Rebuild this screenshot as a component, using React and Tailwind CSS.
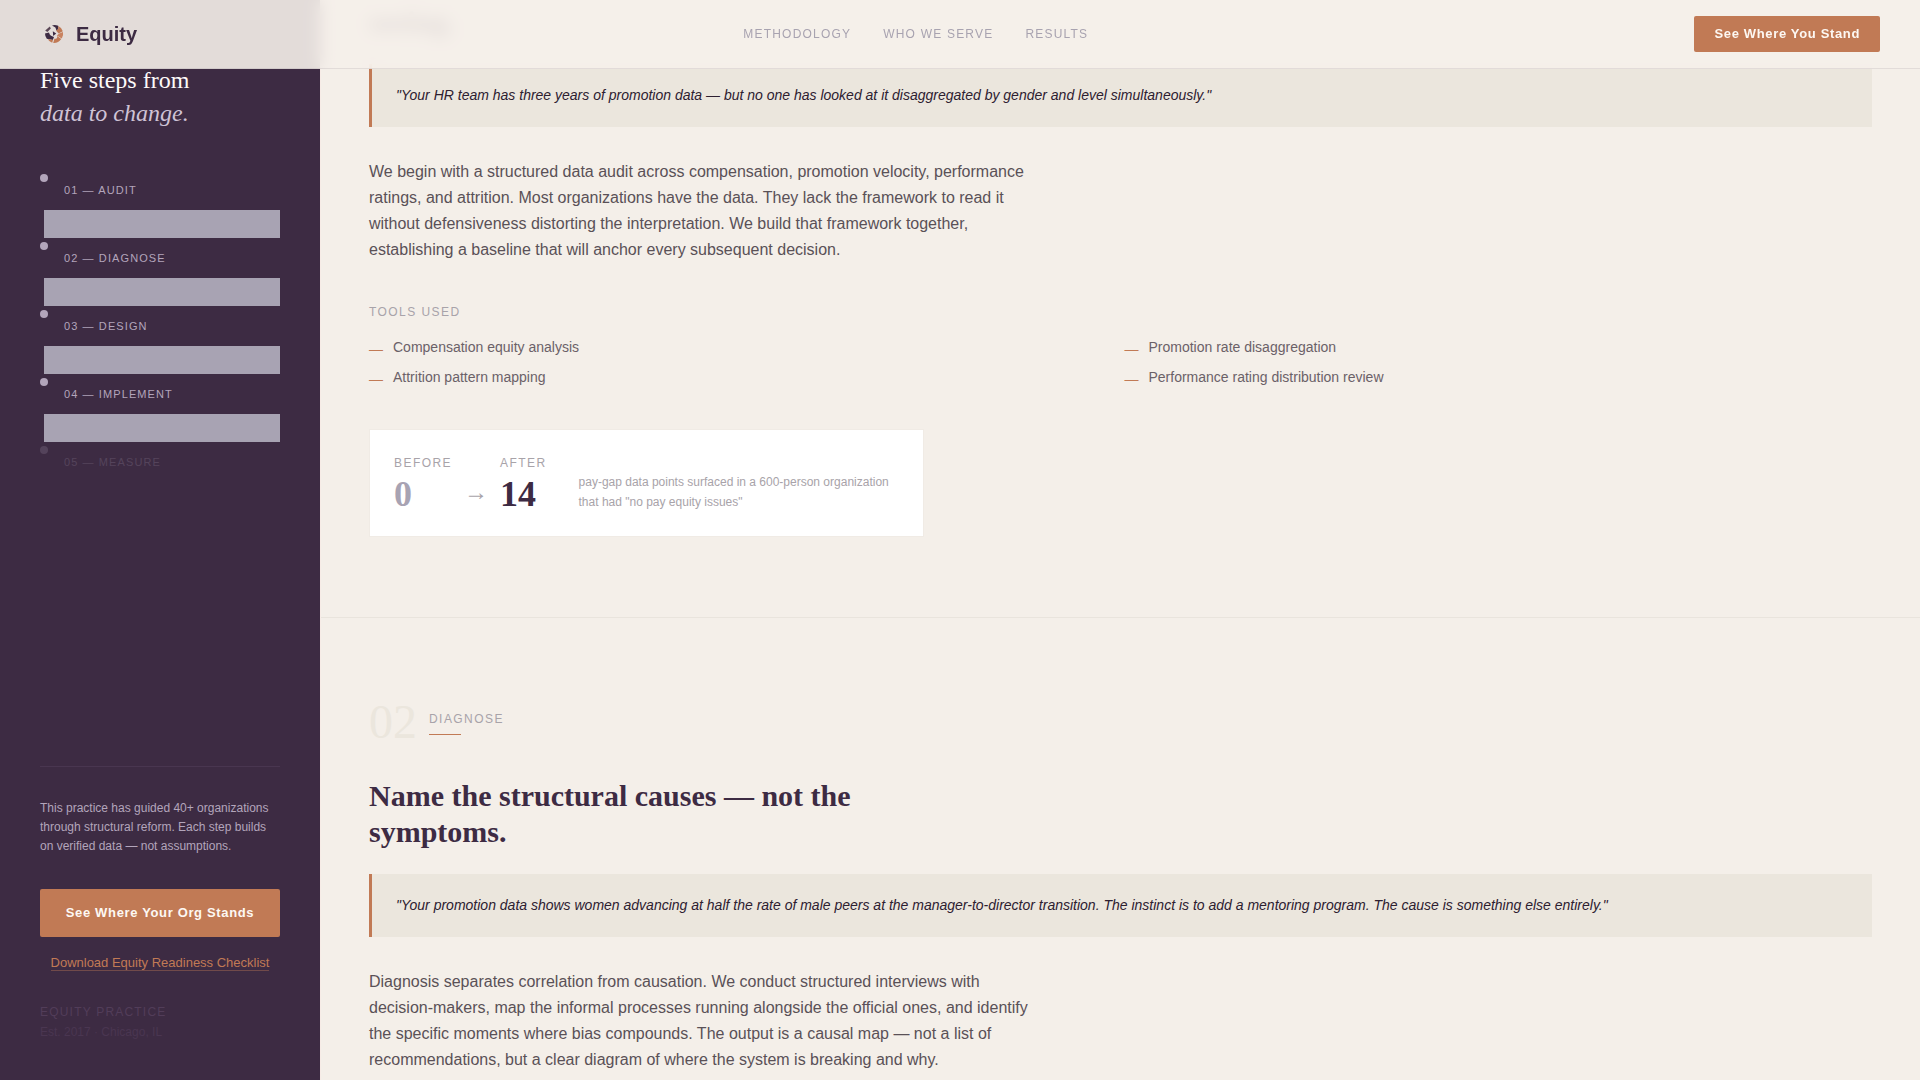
import clsx from 'clsx';

const NAV_LINKS = ['Methodology', 'Who We Serve', 'Results'];

const STEPS = [
  { id: 'audit', label: '01 — Audit', reached: true },
  { id: 'diagnose', label: '02 — Diagnose', reached: true },
  { id: 'design', label: '03 — Design', reached: true },
  { id: 'implement', label: '04 — Implement', reached: true },
  { id: 'measure', label: '05 — Measure', reached: false },
];

const AUDIT_TOOLS = [
  'Compensation equity analysis',
  'Promotion rate disaggregation',
  'Attrition pattern mapping',
  'Performance rating distribution review',
];

function Logo() {
  return (
    <svg width="28" height="28" viewBox="0 0 28 28" aria-hidden="true">
      <path d="M5.2 10.6 L9.8 6.4 L10.8 8.6 L7.4 12 Z" fill="#5b4656" />
      <path d="M12 5.4 Q15 4.4 18.2 5.8 L18.4 8.8 L16.6 10.8 L15.4 7.6 Z" fill="#3d2b43" />
      <path d="M18.2 6 Q21.8 7.6 22.8 11.2 L18.6 13.4 L16.2 10.8 L18.4 8.8 Z" fill="#c17a55" />
      <path d="M23 12 A9 9 0 0 1 21.8 18.6 L16.8 15.6 Q18.6 13.4 23 12 Z" fill="#c98361" />
      <path d="M21.2 19 A9 9 0 0 1 13.2 23 L14.4 18.8 Q18 19 17 16 Z" fill="#c17a55" />
      <path d="M5 13.4 L9 12.6 Q9.8 16.2 14 17 L12.8 20 L6.8 18.8 A9 9 0 0 1 5 13.4 Z" fill="#3d2b43" />
      <path d="M7.8 19.2 L13 19.8 L12.2 22.8 Q9.4 21.8 7.8 19.2 Z" fill="#c17a55" />
      <path d="M12.8 11.2 L16.2 13.6 L13.2 16 Z" fill="#3d2b43" />
    </svg>
  );
}

function Header() {
  return (
    <header className="fixed inset-x-0 top-0 z-20 border-b border-[#3d2b43]/10 bg-[#f5f0ea]/90 backdrop-blur-sm">
      <div className="flex h-17 items-center justify-between px-10">
        <a href="#top" className="flex items-center gap-2 text-xl font-bold text-[#3d2b43]">
          <Logo />
          Equity
        </a>
        <nav className="flex gap-8">
          {NAV_LINKS.map((link) => (
            <a key={link} href="#top" className="text-xs tracking-widest text-[#a8a3b0] uppercase">
              {link}
            </a>
          ))}
        </nav>
        <button
          type="button"
          className="h-9 rounded-xs bg-[#c17a55] px-5 text-[13px] font-bold tracking-wider text-[#fdf8f3]"
        >
          See Where You Stand
        </button>
      </div>
    </header>
  );
}

function StepItem({ step, last }) {
  return (
    <li className={clsx(!step.reached && 'opacity-20')}>
      <div className="h-2 w-2 rounded-full bg-[#b3a5bb]" />
      <a
        href={`#${step.id}`}
        className="block pl-6 text-[11px] leading-4 tracking-widest text-[#b3a5bb] uppercase"
      >
        {step.label}
      </a>
      {!last && <div className="mt-3 mb-1 ml-1 h-7 bg-[#a8a3b3]" />}
    </li>
  );
}

function Sidebar() {
  return (
    <aside className="flex w-80 shrink-0 flex-col bg-[#3d2b43] px-10 pt-16 pb-[38px]">
      <h2 className="font-['Liberation_Serif',serif] text-2xl leading-[33px] text-[#fdfafa]">
        Five steps from
        <br />
        <em className="text-[#cfc3d6]">data to change.</em>
      </h2>

      <ol className="mt-11">
        {STEPS.map((step, i) => (
          <StepItem key={step.id} step={step} last={i === STEPS.length - 1} />
        ))}
      </ol>

      <div className="mt-auto border-t border-[#493650] pt-8">
        <p className="text-xs leading-[19px] text-[#b3a5bb]">
          This practice has guided 40+ organizations through structural reform. Each step builds on
          verified data — not assumptions.
        </p>
        <button
          type="button"
          className="mt-[33px] h-12 w-full rounded-xs bg-[#c17a55] text-[13px] font-bold tracking-wider text-[#fdf8f3]"
        >
          See Where Your Org Stands
        </button>
        <div className="mt-4 text-center text-[13px] leading-5">
          <a href="#checklist" className="border-b border-[#c17a55]/40 text-[#c17a55]">
            Download Equity Readiness Checklist
          </a>
        </div>
        <div className="mt-[29px] text-xs leading-5 text-[#523d59]">
          <p className="tracking-widest uppercase">Equity Practice</p>
          <p className="text-[#4a3651]">Est. 2017 · Chicago, IL</p>
        </div>
      </div>
    </aside>
  );
}

function SectionHeading({ children }) {
  return (
    <h2 className="max-w-[560px] font-['Liberation_Serif',serif] text-3xl leading-9 font-bold text-[#3d2b43]">
      {children}
    </h2>
  );
}

function Quote({ children }) {
  return (
    <blockquote className="mt-6 border-l-3 border-[#c17a55] bg-[#ebe6dd] px-6 py-5 text-sm leading-[23px] text-[#2d2030] italic">
      {children}
    </blockquote>
  );
}

function Body({ children }) {
  return <p className="mt-8 max-w-[664px] text-base leading-[26px] text-[#5a5157]">{children}</p>;
}

function Label({ children }) {
  return <div className="text-xs leading-[18px] tracking-[0.12em] text-[#a8a3a9] uppercase">{children}</div>;
}

function ResultCard() {
  return (
    <div className="mt-10 flex w-fit items-end gap-8 border border-[#f0ebe5] bg-white p-6">
      <div className="flex items-end gap-3">
        <div>
          <Label>Before</Label>
          <div className="mt-1 font-['Liberation_Serif',serif] text-4xl leading-9 font-bold text-[#a8a3b3]">0</div>
        </div>
        <div className="pb-2 text-2xl leading-6 text-[#a8a3a9]">→</div>
        <div>
          <Label>After</Label>
          <div className="mt-1 font-['Liberation_Serif',serif] text-4xl leading-9 font-bold text-[#3d2b43]">14</div>
        </div>
      </div>
      <p className="w-80 text-xs leading-5 text-[#a8a3a9]">
        pay-gap data points surfaced in a 600-person organization that had "no pay equity issues"
      </p>
    </div>
  );
}

export default function App() {
  return (
    <div className="flex h-screen overflow-hidden bg-[#f4efe9] font-['Liberation_Sans',sans-serif]">
      <Header />
      <Sidebar />

      <main className="min-w-0 flex-1 border-l border-[#f6ebe6]">
        {/* 01 Audit */}
        <section id="audit" className="border-b border-[#e9e4dd] px-12 pt-1 pb-20">
          <SectionHeading>seeing.</SectionHeading>
          <Quote>
            "Your HR team has three years of promotion data — but no one has looked at it disaggregated
            by gender and level simultaneously."
          </Quote>
          <Body>
            We begin with a structured data audit across compensation, promotion velocity, performance
            ratings, and attrition. Most organizations have the data. They lack the framework to read it
            without defensiveness distorting the interpretation. We build that framework together,
            establishing a baseline that will anchor every subsequent decision.
          </Body>
          <div className="mt-10">
            <Label>Tools Used</Label>
          </div>
          <ul className="mt-4 grid grid-cols-2 gap-2 text-sm leading-5 text-[#6b6168]">
            {AUDIT_TOOLS.map((tool) => (
              <li key={tool} className="flex gap-2.5">
                <span className="mt-0.5 text-[#c17a55]">—</span>
                {tool}
              </li>
            ))}
          </ul>
          <ResultCard />
        </section>

        {/* 02 Diagnose */}
        <section id="diagnose" className="px-12 py-20">
          <div className="mb-8 flex items-center gap-3">
            <span className="font-['Liberation_Serif',serif] text-5xl leading-none text-[#ebe6dd]">02</span>
            <div>
              <Label>Diagnose</Label>
              <div className="mt-1.5 h-px w-8 bg-[#c17a55]" />
            </div>
          </div>
          <SectionHeading>Name the structural causes — not the symptoms.</SectionHeading>
          <Quote>
            "Your promotion data shows women advancing at half the rate of male peers at the
            manager-to-director transition. The instinct is to add a mentoring program. The cause is
            something else entirely."
          </Quote>
          <Body>
            Diagnosis separates correlation from causation. We conduct structured interviews with
            decision-makers, map the informal processes running alongside the official ones, and identify
            the specific moments where bias compounds. The output is a causal map — not a list of
            recommendations, but a clear diagram of where the system is breaking and why.
          </Body>
        </section>
      </main>
    </div>
  );
}
